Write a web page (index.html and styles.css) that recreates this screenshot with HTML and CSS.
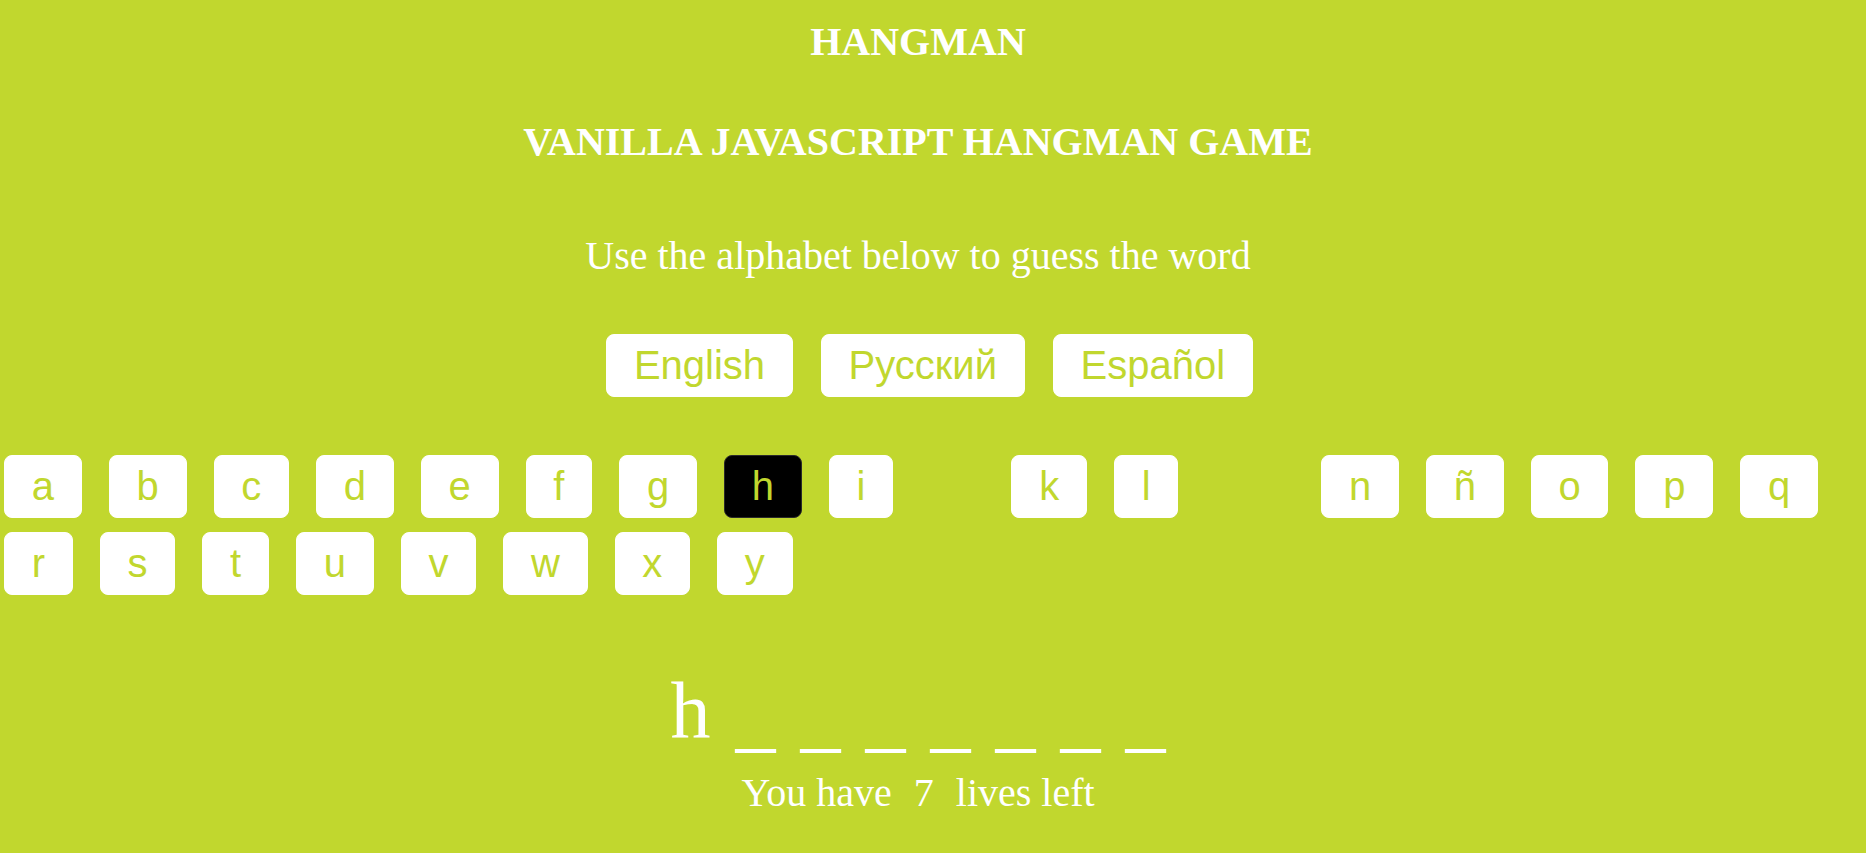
FILE: index.html
```html
<!DOCTYPE html>
<html lang="en">
<head>
<meta charset="utf-8">
<title>Hangman</title>
<link rel="stylesheet" href="styles.css">
</head>
<body>
<div class="page">
  <h1 class="title">HANGMAN</h1>
  <h2 class="subtitle">VANILLA JAVASCRIPT HANGMAN GAME</h2>
  <p class="instructions">Use the alphabet below to guess the word</p>

  <div class="languages">
    <button class="key lang">English</button>
    <button class="key lang">Русский</button>
    <button class="key lang">Español</button>
  </div>

  <ul class="alphabet">
    <li class="key">a</li>
    <li class="key">b</li>
    <li class="key">c</li>
    <li class="key">d</li>
    <li class="key">e</li>
    <li class="key">f</li>
    <li class="key">g</li>
    <li class="key active">h</li>
    <li class="key">i</li>
    <li class="key used">j</li>
    <li class="key">k</li>
    <li class="key">l</li>
    <li class="key used">m</li>
    <li class="key">n</li>
    <li class="key">ñ</li>
    <li class="key">o</li>
    <li class="key">p</li>
    <li class="key">q</li>
    <li class="key">r</li>
    <li class="key">s</li>
    <li class="key">t</li>
    <li class="key">u</li>
    <li class="key">v</li>
    <li class="key">w</li>
    <li class="key">x</li>
    <li class="key">y</li>
    <li class="key used">z</li>
  </ul>

  <div class="game">
    <ul class="word">
      <li class="guess">h</li>
      <li class="guess blank">_</li>
      <li class="guess blank">_</li>
      <li class="guess blank">_</li>
      <li class="guess blank">_</li>
      <li class="guess blank">_</li>
      <li class="guess blank">_</li>
      <li class="guess blank">_</li>
    </ul>
    <p class="lives">You have <span class="lives-count">7</span> lives left</p>
  </div>
</div>
</body>
</html>
```

FILE: styles.css
```css
html, body {
  margin: 0;
  padding: 0;
  background: #c1d72e;
}

body {
  font-family: "Liberation Serif", "Times New Roman", serif;
  color: #ffffff;
  min-height: 853px;
}

.page {
  display: flex;
  flex-direction: column;
  padding-right: 30px;
}

.title,
.subtitle {
  margin: 0;
  font-size: 40px;
  line-height: 44px;
  font-weight: bold;
  text-align: center;
}

.title {
  margin-top: 20px;
}

.subtitle {
  margin-top: 56px;
}

.instructions {
  margin: 70px 0 0;
  font-size: 40px;
  line-height: 44px;
  text-align: center;
}

.key {
  font-family: "Liberation Sans", Arial, sans-serif;
  font-size: 40px;
  line-height: 47px;
  color: #c1d72e;
  background: #ffffff;
  border: 1px solid #ffffff;
  border-radius: 8px;
  padding: 7px 26.75px;
  margin: 0;
  cursor: pointer;
  box-sizing: content-box;
}

.languages {
  display: flex;
  justify-content: center;
  gap: 28px;
  margin-top: 56px;
  padding-left: 23px;
}

.lang {
  display: block;
}

.alphabet {
  list-style: none;
  margin: 58px 0 0;
  padding: 0 0 0 4px;
  display: flex;
  flex-wrap: wrap;
  column-gap: 27px;
  row-gap: 14px;
}

.alphabet .key {
  display: block;
}

.key.active {
  background: #000000;
  border-color: #2a2a2a;
  color: #c1d72e;
}

.key.used {
  visibility: hidden;
}

.game {
  display: flex;
  flex-direction: column;
  align-items: center;
}

.word {
  list-style: none;
  margin: 70px 0 0;
  padding: 0;
  display: flex;
  align-items: flex-start;
  gap: 25px;
  font-size: 80px;
  line-height: 90px;
}

.guess {
  display: block;
}

.guess.blank {
  padding-top: 6px;
  margin-bottom: -6px;
}

.lives {
  margin: 16px 0 0;
  font-size: 40px;
  line-height: 44px;
  text-align: center;
}

.lives-count {
  margin: 0 12px;
}
```
